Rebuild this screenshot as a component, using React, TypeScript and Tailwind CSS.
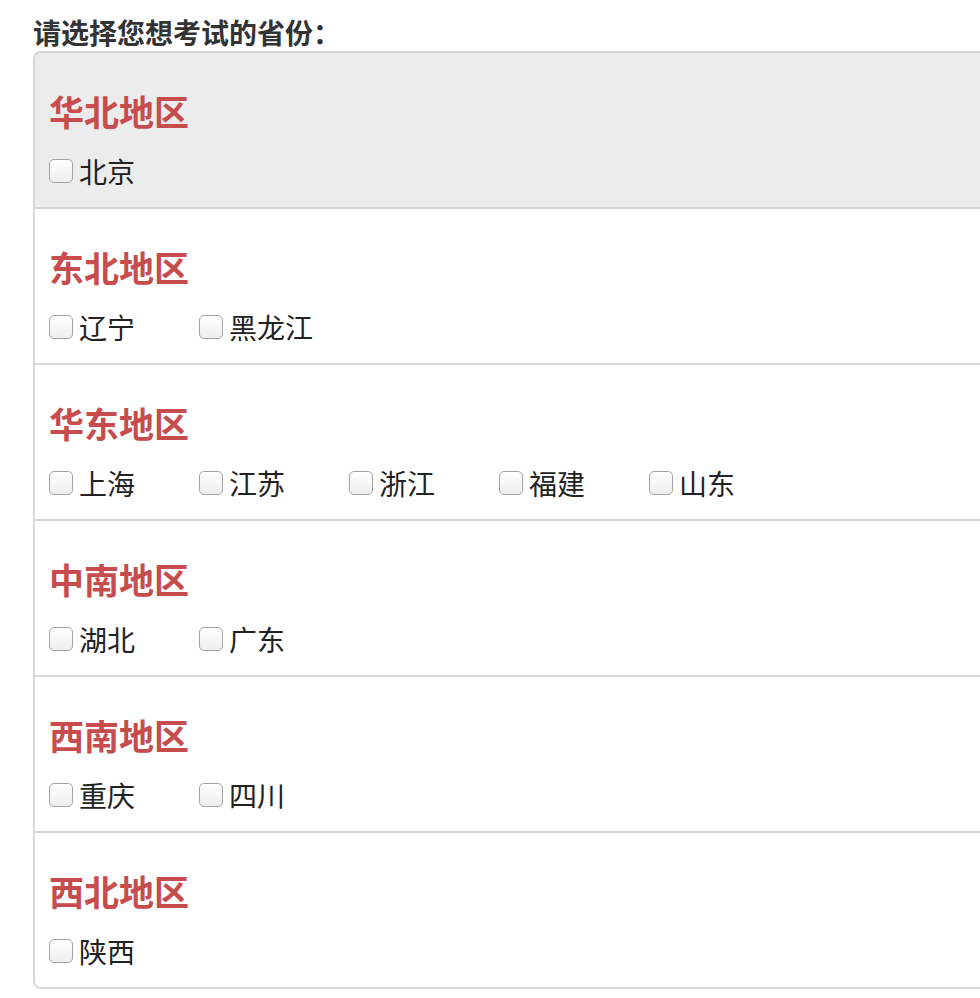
const regions: { name: string; provinces: string[]; active?: boolean }[] = [
  { name: '华北地区', provinces: ['北京'], active: true },
  { name: '东北地区', provinces: ['辽宁', '黑龙江'] },
  { name: '华东地区', provinces: ['上海', '江苏', '浙江', '福建', '山东'] },
  { name: '中南地区', provinces: ['湖北', '广东'] },
  { name: '西南地区', provinces: ['重庆', '四川'] },
  { name: '西北地区', provinces: ['陕西'] },
];

const App = () => {
  return (
    <div
      className="w-[980px] h-[998px] overflow-hidden bg-white text-[#222]"
      style={{ fontFamily: '"Noto Sans CJK SC", "Noto Sans", sans-serif' }}
    >
      <div className="pl-[33px] pt-[16px]">
        <div className="text-[28px] leading-[33px] font-bold text-[#333] mb-[2px]">请选择您想考试的省份：</div>
        <div className="w-[1000px] border-2 border-[#d6d6d6] rounded-[8px] overflow-hidden">
          {regions.map((r, i) => (
            <div
              key={r.name}
              className={`px-[14px] pt-[38px] ${i > 0 ? 'h-[156px] border-t-2 border-[#d6d6d6]' : 'h-[154px]'} ${r.active ? 'bg-[#ececec]' : 'bg-white'}`}
            >
              <h3 className="text-[35px] leading-[40px] font-bold text-[#c64c4e]">{r.name}</h3>
              <div className="flex mt-[22px]">
                {r.provinces.map((p) => (
                  <label key={p} className="w-[150px] flex items-center text-[28px] leading-[36px] text-[#222]">
                    <span className="w-[24px] h-[24px] rounded-[5px] border border-[#a3a3a3] bg-gradient-to-b from-white to-[#eeeeee] mr-[6px] shrink-0" />
                    {p}
                  </label>
                ))}
              </div>
            </div>
          ))}
        </div>
      </div>
    </div>
  );
};

export default App;
